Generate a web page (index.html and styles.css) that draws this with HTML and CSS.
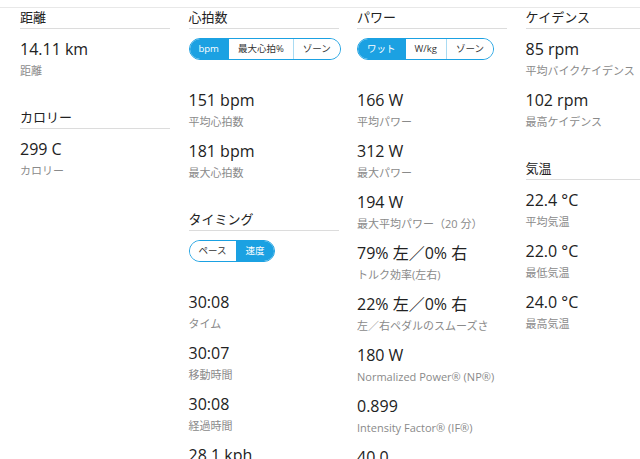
FILE: index.html
```html
<!DOCTYPE html>
<html lang="ja">
<head>
<meta charset="utf-8">
<title>Stats</title>
<link rel="stylesheet" href="styles.css">
</head>
<body>
<div class="page">
  <div class="col">
    <section class="sec">
      <h3 class="sec-title">距離</h3>
      <div class="stat"><div class="val">14.11 km</div><div class="lbl">距離</div></div>
    </section>
    <section class="sec">
      <h3 class="sec-title">カロリー</h3>
      <div class="stat"><div class="val">299 C</div><div class="lbl">カロリー</div></div>
    </section>
  </div>
  <div class="col">
    <section class="sec">
      <h3 class="sec-title">心拍数</h3>
      <div class="toggle"><span class="seg on">bpm</span><span class="seg">最大心拍%</span><span class="seg">ゾーン</span></div>
      <div class="stat"><div class="val">151 bpm</div><div class="lbl">平均心拍数</div></div>
      <div class="stat"><div class="val">181 bpm</div><div class="lbl">最大心拍数</div></div>
    </section>
    <section class="sec">
      <h3 class="sec-title">タイミング</h3>
      <div class="toggle"><span class="seg">ペース</span><span class="seg on">速度</span></div>
      <div class="stat"><div class="val">30:08</div><div class="lbl">タイム</div></div>
      <div class="stat"><div class="val">30:07</div><div class="lbl">移動時間</div></div>
      <div class="stat"><div class="val">30:08</div><div class="lbl">経過時間</div></div>
      <div class="stat"><div class="val">28.1 kph</div><div class="lbl">平均速度</div></div>
    </section>
  </div>
  <div class="col">
    <section class="sec">
      <h3 class="sec-title">パワー</h3>
      <div class="toggle"><span class="seg on">ワット</span><span class="seg">W/kg</span><span class="seg">ゾーン</span></div>
      <div class="stat"><div class="val">166 W</div><div class="lbl">平均パワー</div></div>
      <div class="stat"><div class="val">312 W</div><div class="lbl">最大パワー</div></div>
      <div class="stat"><div class="val">194 W</div><div class="lbl">最大平均パワー（20 分）</div></div>
      <div class="stat"><div class="val">79% 左／0% 右</div><div class="lbl">トルク効率(左右)</div></div>
      <div class="stat"><div class="val">22% 左／0% 右</div><div class="lbl">左／右ペダルのスムーズさ</div></div>
      <div class="stat"><div class="val">180 W</div><div class="lbl">Normalized Power® (NP®)</div></div>
      <div class="stat"><div class="val">0.899</div><div class="lbl">Intensity Factor® (IF®)</div></div>
      <div class="stat"><div class="val">40.0</div><div class="lbl">Training Stress Score® (TSS®)</div></div>
    </section>
  </div>
  <div class="col">
    <section class="sec">
      <h3 class="sec-title">ケイデンス</h3>
      <div class="stat"><div class="val">85 rpm</div><div class="lbl">平均バイクケイデンス</div></div>
      <div class="stat"><div class="val">102 rpm</div><div class="lbl">最高ケイデンス</div></div>
    </section>
    <section class="sec">
      <h3 class="sec-title">気温</h3>
      <div class="stat"><div class="val">22.4 °C</div><div class="lbl">平均気温</div></div>
      <div class="stat"><div class="val">22.0 °C</div><div class="lbl">最低気温</div></div>
      <div class="stat"><div class="val">24.0 °C</div><div class="lbl">最高気温</div></div>
    </section>
  </div>
</div>
</body>
</html>
```
FILE: styles.css
```css
html, body {
  margin: 0;
  padding: 0;
  overflow: hidden;
  background: #fff;
}
body {
  font-family: "Open Sans", "Noto Sans CJK JP", sans-serif;
  color: #222;
  padding-top: 7px;
}
.page {
  border-top: 1px solid #e8e8e8;
  padding-left: 20px;
  display: grid;
  grid-template-columns: repeat(4, 150px);
  column-gap: 18.5px;
  align-items: start;
}
.sec + .sec {
  margin-top: 29px;
}
.sec-title {
  margin: 0 0 9px 0;
  font-size: 13px;
  font-weight: normal;
  line-height: 19px;
  padding-bottom: 1px;
  border-bottom: 1px solid #dcdcdc;
  color: #222;
}
.stat {
  margin-bottom: 10px;
}
.val {
  font-size: 16px;
  line-height: 22px;
  color: #222;
  white-space: nowrap;
}
.lbl {
  margin-top: 3px;
  font-size: 11px;
  line-height: 16px;
  color: #8a8a8a;
  white-space: nowrap;
}
.toggle {
  display: flex;
  width: fit-content;
  height: 22px;
  box-sizing: border-box;
  border: 1px solid #1ba1e2;
  border-radius: 12px;
  overflow: hidden;
  margin-bottom: 29px;
}
.seg {
  font-size: 9.5px;
  line-height: 20px;
  padding: 0 9px;
  color: #333;
  background: #fff;
  white-space: nowrap;
}
.seg + .seg {
  border-left: 1px solid #a9dbf3;
}
.seg.on {
  background: #1ba1e2;
  color: #fff;
  border-left-color: #1ba1e2;
}
.seg.on + .seg {
  border-left-color: #1ba1e2;
}
```
